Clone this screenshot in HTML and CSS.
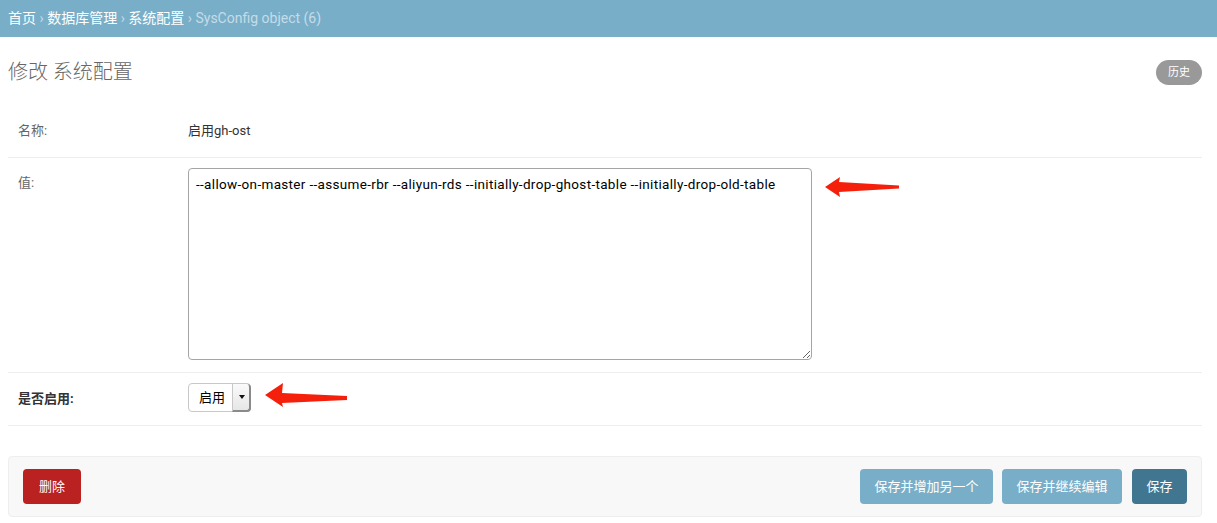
FILE: index.html
```html
<!DOCTYPE html>
<html lang="zh">
<head>
<meta charset="utf-8">
<title>修改 系统配置</title>
<link rel="stylesheet" href="styles.css">
</head>
<body>
<div class="breadcrumbs">
  <a href="#">首页</a> › <a href="#">数据库管理</a> › <a href="#">系统配置</a> › SysConfig object (6)
</div>
<div class="content">
  <div class="header-row">
    <h1 class="title">修改 系统配置</h1>
    <a class="history" href="#">历史</a>
  </div>
  <form class="form">
    <div class="form-row row-name">
      <div class="label">名称:</div>
      <div class="readonly">启用gh-ost</div>
    </div>
    <div class="form-row row-value">
      <label class="label" for="value">值:</label>
      <textarea id="value" class="textarea">--allow-on-master --assume-rbr --aliyun-rds --initially-drop-ghost-table --initially-drop-old-table</textarea>
    </div>
    <div class="form-row row-enabled">
      <label class="label required" for="enabled">是否启用:</label>
      <span class="select-wrap">
        <select id="enabled" class="select">
          <option>启用</option>
          <option>禁用</option>
        </select>
      </span>
    </div>
    <div class="submit-row">
      <a class="btn btn-delete" href="#">删除</a>
      <div class="btn-group">
        <button type="button" class="btn btn-light">保存并增加另一个</button>
        <button type="button" class="btn btn-light">保存并继续编辑</button>
        <button type="button" class="btn btn-default">保存</button>
      </div>
    </div>
  </form>
</div>
<svg class="annotations" width="1217" height="523" viewBox="0 0 1217 523" aria-hidden="true">
  <polygon fill="#f5200c" points="825,187 840,177 839,182 899,185.5 899,188.5 839,192 840,197"/>
  <polygon fill="#f5200c" points="265,395 283,383 282,393 347,396 347,400 282,403 283,407"/>
</svg>
</body>
</html>
```
FILE: styles.css
```css
* { box-sizing: border-box; }
html, body { margin: 0; padding: 0; }
body {
  font-family: Roboto, "Noto Sans CJK SC", "Liberation Sans", sans-serif;
  font-size: 14px;
  color: #333;
  background: #fff;
  position: relative;
  width: 1217px;
  height: 523px;
  overflow: hidden;
}
a { text-decoration: none; }

.breadcrumbs {
  background: #79aec8;
  color: #c4dce8;
  padding: 10px 8px;
  height: 37px;
  line-height: 17px;
  font-size: 14px;
}
.breadcrumbs a { color: #fff; }

.content { padding: 0 15px 0 8px; }

.header-row {
  margin-top: 20px;
  height: 30px;
  display: flex;
  align-items: center;
  justify-content: space-between;
}
.title {
  margin: 0;
  font-size: 20px;
  font-weight: 300;
  color: #666;
  line-height: 24px;
}
.history {
  background: #999;
  color: #fff;
  font-size: 11px;
  height: 25px;
  line-height: 25px;
  padding: 0 12px;
  border-radius: 13px;
}

.form { margin-top: 22px; }

.form-row {
  display: flex;
  padding: 10px;
  border-bottom: 1px solid #eee;
  font-size: 13px;
}
.label {
  flex: 0 0 170px;
  padding-right: 10px;
  color: #666;
  line-height: 16px;
}
.label.required { color: #333; font-weight: bold; }

.row-name { height: 49px; }
.row-name .label, .row-name .readonly { padding-top: 4px; line-height: 16px; }
.readonly { color: #333; }

.row-value { height: 215px; }
.row-value .label { padding-top: 7px; }
.textarea {
  display: block;
  width: 624px;
  height: 192px;
  border: 1px solid #a5a5a5;
  border-radius: 4px;
  padding: 7px 7px 6px;
  font-family: Roboto, "Noto Sans CJK SC", "Liberation Sans", sans-serif;
  font-size: 13.5px;
  letter-spacing: 0.33px;
  line-height: 16px;
  color: #000;
  resize: both;
  font-variant-ligatures: none;
  font-feature-settings: "liga" 0, "calt" 0;
}

.row-enabled { height: 53px; }
.row-enabled .label { padding-top: 8px; }
.select-wrap {
  position: relative;
  display: inline-block;
  width: 63px;
  height: 29px;
}
.select {
  appearance: none;
  -webkit-appearance: none;
  width: 63px;
  height: 29px;
  border: 1px solid #c8c8c8;
  border-radius: 4px;
  background: #fff;
  padding: 0 0 0 10px;
  font-family: Roboto, "Noto Sans CJK SC", "Liberation Sans", sans-serif;
  font-size: 13px;
  color: #000;
}
.select-wrap::before {
  content: "";
  position: absolute;
  top: 1px;
  right: 0;
  bottom: 0;
  width: 16px;
  border-left: 1px solid #c8c8c8;
  border-right: 2px solid #8a8a8a;
  border-bottom: 2px solid #8a8a8a;
  border-radius: 0 4px 4px 0;
  background: linear-gradient(#fafafa, #e6e6e6);
  pointer-events: none;
}
.select-wrap::after {
  content: "";
  position: absolute;
  top: 12px;
  right: 6px;
  border-left: 3px solid transparent;
  border-right: 3px solid transparent;
  border-top: 4px solid #111;
  pointer-events: none;
}

.submit-row {
  margin-top: 30px;
  display: flex;
  justify-content: space-between;
  align-items: center;
  padding: 12px 14px;
  background: #f8f8f8;
  border: 1px solid #eee;
  border-radius: 4px;
}
.btn-group { display: flex; gap: 9px; }
.btn-group .btn-default { margin-left: 1px; }
.btn {
  display: inline-block;
  height: 35px;
  line-height: 35px;
  padding: 0 14.5px;
  border: none;
  border-radius: 4px;
  color: #fff;
  font-family: Roboto, "Noto Sans CJK SC", "Liberation Sans", sans-serif;
  font-size: 13px;
  cursor: pointer;
}
.btn-delete { background: #ba2121; padding: 0 16px; }
.btn-light { background: #79aec8; }
.btn-default { background: #417690; }

.annotations {
  position: absolute;
  left: 0;
  top: 0;
  pointer-events: none;
}
```
